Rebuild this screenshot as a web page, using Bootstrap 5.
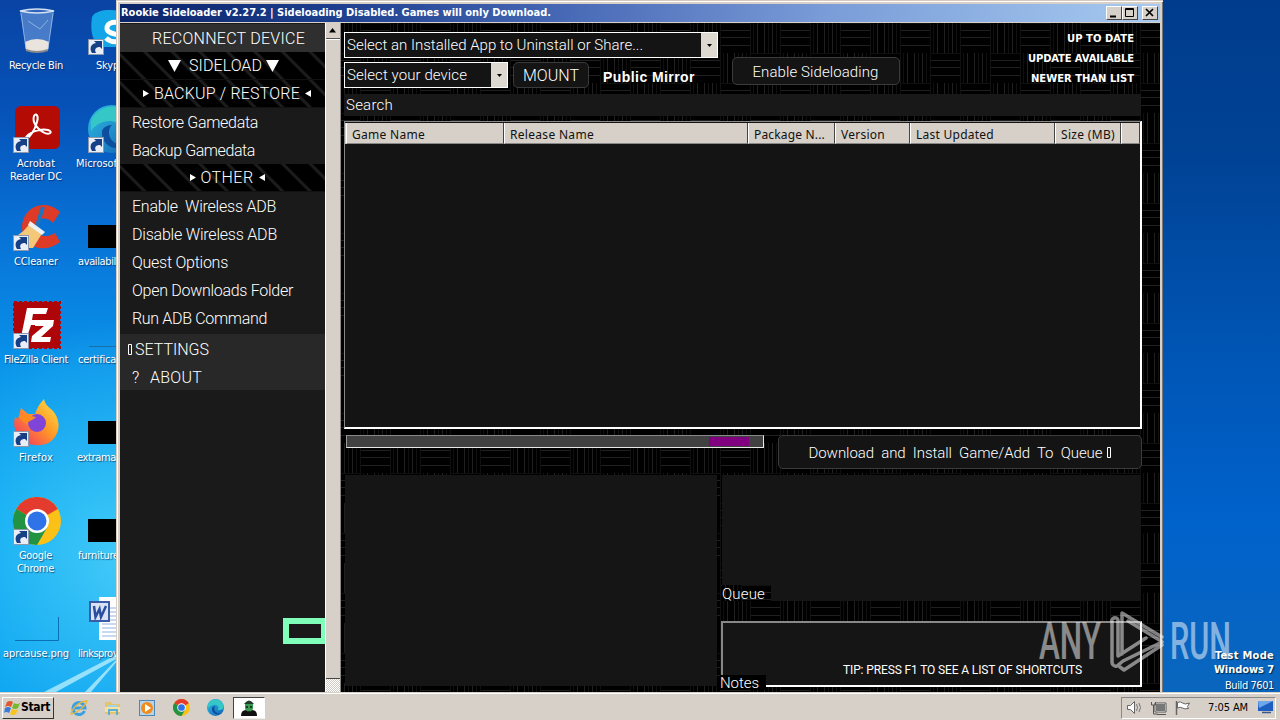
<!DOCTYPE html>
<html lang="en">
<head>
  <meta charset="UTF-8">
  <title>Rookie Sideloader</title>
  <meta name="viewport" content="width=device-width, initial-scale=1">
  <link href="https://cdn.jsdelivr.net/npm/bootstrap@5.3.3/dist/css/bootstrap.min.css" rel="stylesheet">
  <style>
    :root {
      --face: #d6d0c8;
      --weave: url("data:image/svg+xml,%3Csvg xmlns='http://www.w3.org/2000/svg' width='60' height='60'%3E%3Cg stroke='%23202020' fill='none'%3E%3Cpath d='M0 7.5h30M0 14.5h30M0 22.5h30M30 37.5h30M30 44.5h30M30 52.5h30M37.5 0v30M44.5 0v30M52.5 0v30M7.5 30v30M14.5 30v30M22.5 30v30'/%3E%3Cpath stroke='%23101010' d='M0 .5h30M30 30.5h30M30.5 0v60M.5 0v60M33.5 0v30M48.5 0v30M56.5 0v30M3.5 30v30M18.5 30v30M26.5 30v30'/%3E%3C/g%3E%3C/svg%3E");
    }
    body {
      width: 1280px; height: 720px; overflow: hidden; color: #fff;
      font-family: "Roboto", "Liberation Sans", sans-serif; font-size: 15px; font-weight: 300; line-height: 1;
    }
    .desktop {
      height: 692px;
      background:
        linear-gradient(180deg, #003c8e 0, #004294 150px, #0055b4 350px, #0062cc 520px, #0a66bd 692px) right / 130px 100% no-repeat,
        radial-gradient(circle at 130px 560px, rgba(90, 215, 250, .75), rgba(60, 190, 250, 0) 240px),
        linear-gradient(180deg, #0a44a4 0, #0652b8 110px, #0874d8 240px, #0894ea 370px, #00a4f2 520px, #009cf0 692px);
    }
    .rays { left: 0; top: 640px; }
    .icon-col { top: 0; }
    .shortcut { height: 98px; padding-top: 7px; }
    .shortcut svg { display: block; }
    .shortcut .caption-text {
      font: 11px/13px "DejaVu Sans Condensed", "Noto Sans", sans-serif;
      margin-top: 4px; text-shadow: 1px 1px 1px rgba(0, 20, 60, .6);
    }
    .fit { display: inline-block; white-space: pre; }

    /* application window */
    .app-window {
      left: 116px; top: 0; width: 1047px; height: 692px; background: var(--face);
      border-left: 1px solid #d9cfc3; border-top: 1px solid #d6c8bc; box-shadow: inset 1px 1px #fff, inset -1px 0 #777;
      padding: 3px 3px 0 3px;
    }
    .title-row {
      height: 18px; margin-bottom: 1px; padding: 0 2px 0 1px;
      background: linear-gradient(90deg, #0a246a 0, #1c3e8c 20%, #4667b4 42%, #7a9cd8 68%, #a6caf0 100%);
      font: bold 11px/18px "DejaVu Sans Condensed", sans-serif;
    }
    .win-btn { width: 16px; height: 14px; background: var(--face); border: 1px solid; border-color: #fff #444 #444 #fff; }
    .win-btn svg { display: block; }
    .side { width: 205px; background: #1a1a1a; font-size: 16px; padding-top: 1px; }
    .side-row { height: 28px; padding: 1px 0 0 12px; }
    .side-row.last { margin-bottom: 2px; }
    .side-row.action { background: #2f2f2f; }
    .side-row.low { background: #282828; padding-top: 3px; }
    .side-row.group {
      padding-left: 2px; border-bottom: 1px solid #111;
      background: repeating-linear-gradient(45deg, #000 0 15px, #1d1d1d 16.500px 18px, #000 19.500px);
    }
    .side-row.narrow { padding-left: 9px; }
    .focus-mark { left: 166px; top: 617px; width: 42px; height: 26px; border: 6px solid #80ffba; border-right-width: 4px; background: #1a1a1a; }
    .scroll-strip { width: 16px; background: var(--face); border-left: 1px solid #fff; border-right: 1px solid #888; }
    .scroll-up { height: 16px; border-bottom: 1px solid #555; }
    .scroll-thumb { height: 640px; border-top: 1px solid #fff; border-bottom: 1px solid #444; }
    .scroll-gap { height: 14px; background: conic-gradient(#fff 25%, #cfcac2 0 50%, #fff 0 75%, #cfcac2 0) 0 0 / 2px 2px; }
    .weave { background: #000 var(--weave) 19px 0; }
    .main-area { padding: 9px 18px 0 3px; width: 819px; }

    .combo { height: 26px; border: 1px solid #fff; background: #141414; font-size: 15px; padding-left: 2px; }
    .combo-wide { width: 374px; }
    .combo-small { width: 164px; }
    .combo .arrow { width: 16px; background: #ddd8d0; height: 100%; }
    .dark-btn { background: #141414; border: 1px solid #3b3b3b; border-radius: 5px; color: #fff; font-size: 15px; padding-top: 2px; }
    .mount-btn { width: 76px; height: 26px; margin-left: 5px; font-size: 16px; }
    .mirror-text { margin-left: 14px; font: bold 14px/16px "Liberation Sans", sans-serif; }
    .enable-btn { width: 168px; height: 28px; margin: 25px 0 0 14px; padding-right: 1px; }
    .legend-text { font: bold 10px/20px "DejaVu Sans", sans-serif; padding-right: 8px; margin: -3px 0 -5px; }
    .search-bar { height: 22px; background: #181818; padding-left: 2px; margin: 6px 0 5px; width: 797px; }
    .game-list { height: 308px; width: 798px; background: #141414; border: 2px solid #fff; border-top: 1px solid #888; border-left: 1px solid #888; }
    .list-head { height: 21px; margin: 1px 0 0 0; padding-left: 1px; background: var(--face); color: #111; font: 12px/23px "Noto Sans", sans-serif; }
    .list-head > div { border-left: 1px solid #fff; border-right: 1px solid #444; border-bottom: 1px solid #888; padding-left: 5px; height: 21px; overflow: hidden; }
    .lower-row { margin-top: 6px; }
    .progress-box { width: 418px; height: 13px; margin-left: 2px; background: #414141; border: 1px solid #e8e8e8; border-top-color: #888; border-left-color: #999; }
    .progress-chunk { height: 9px; margin: 1px 14px 0 0; width: 40px; background: #800080; }
    .download-btn { width: 364px; height: 34px; margin-left: 14px; padding-left: 1px; }
    .panes { margin: 6px 0 0 1px; }
    .pane { background: #151515; }
    .info-pane { width: 372px; height: 211px; }
    .right-panes { margin-left: 5px; width: 419px; }
    .queue-pane { height: 126px; margin-bottom: 20px; }
    .pane-tag { background-color: #000; font-size: 15px; height: 16px; }
    .queue-tag { width: 49px; padding-top: 2px; }
    .notes-box { width: 421px; height: 66px; background: #151515; border: 2px solid #fff; border-top-color: #888; border-left-color: #888; margin-left: -1px; }
    .tip-text { left: 120px; top: 40px; font-size: 12px; line-height: 14px; font-weight: 400; }
    .notes-tag { left: -3px; top: 52px; width: 46px; height: 15px; padding-top: 1px; }
    .watermark { left: 1030px; top: 600px; }
    .test-mode { right: 6px; top: 649px; font: bold 11px/14px "DejaVu Sans Condensed", sans-serif; text-shadow: 1px 1px 1px #024; }
    .test-mode .build { font-weight: 400; line-height: 17px; }

    /* taskbar */
    .task-strip { height: 28px; background: var(--face); border-top: 1px solid var(--face); box-shadow: inset 0 1px #fff; color: #000; padding: 2px 4px 0 2px; font: 11px "DejaVu Sans Condensed", sans-serif; }
    .start-btn { width: 52px; height: 22px; border: 1px solid; border-color: #fff #333 #333 #fff; font: bold 12px/19px "DejaVu Sans Condensed", sans-serif; padding-left: 1px; }
    .quick-icons { margin-left: 15px; }
    .task-icon { width: 20px; height: 22px; margin-right: 14px; }
    .task-active { width: 32px; height: 22px; margin-left: -6px; background: #fff; border: 1px solid #444; border-right-color: #fff; border-bottom-color: #eee; }
    .tray { width: 155px; height: 22px; border: 1px solid; border-color: #888 #fff #fff #888; }
    .tray-gap { margin-left: 6px; }
    .tray .clock-text { margin-left: 16px; }
  </style>
</head>
<body>

  <svg width="0" height="0" class="position-absolute">
    <defs>
      <g id="lnk">
        <rect x=".5" y="32.5" width="15" height="15" fill="#e9eef6" stroke="#8b98ae"/>
        <path d="M4 46c-3-5-1-9 4-10l-2-2h8v8l-2-2c-4 0-6 2-4 6z" fill="#173f86"/>
      </g>
      <g id="chrome">
        <circle cx="24" cy="24" r="24" fill="#fbc116"/>
        <path d="M24 24 3.2 12A24 24 0 0 1 44.800 12z" fill="#e33b2e"/>
        <path d="M3.200 12A24 24 0 0 0 24 48l10.400-18L24 24z" fill="#229342"/>
        <circle cx="24" cy="24" r="12" fill="#fff"/><circle cx="24" cy="24" r="9.500" fill="#2f73e8"/>
      </g>
      <linearGradient id="edgeG" x1="0" y1="0" x2="1" y2="1"><stop offset="0" stop-color="#2fc0e0"/><stop offset="1" stop-color="#1160b8"/></linearGradient>
      <linearGradient id="foxG" x1="1" y1="0" x2="0" y2="1"><stop offset="0" stop-color="#ffe64a"/><stop offset=".45" stop-color="#ff9a26"/><stop offset="1" stop-color="#f2256d"/></linearGradient>
      <g id="edge">
        <circle cx="24" cy="24" r="24" fill="url(#edgeG)"/>
        <path d="M3 16C9-2 41-6 47 20c1 9-7 13-17 10 5-6 1-14-8-14-8 0-15 4-19 10z" fill="#35c6c8"/>
        <path d="M14 27c-1 12 12 21 27 14-9 1-20-4-20-13 0-4 1-6 3-8-5 0-10 3-10 7z" fill="#0d4f9e"/>
      </g>
    </defs>
  </svg>

  <div class="desktop position-relative overflow-hidden">
    <svg class="rays position-absolute" width="120" height="52">
      <path d="M44 52 118 14v4L56 52zM85 52 118 18v2L91 52z" fill="#bdf2ff" opacity=".75"/>
    </svg>

    <div class="icon-col position-absolute start-0">
      <div class="shortcut">
        <svg width="48" height="48" class="ms-3">
          <path d="M4 4h34l-6 38q-11 4-22 0z" fill="#7aa6e2" opacity=".55"/>
          <path d="M4 4q17-4 34 0-17 4-34 0z" fill="#2d63ba" stroke="#d4e2f2" stroke-width="1.500"/>
          <path d="M9 35q12-6 24 0l-1 8q-11 4-22 0z" fill="#e9e4de"/><path d="M10 43q11 4 22 0" stroke="#8a8a8a" stroke-width="2" fill="none"/>
          <path d="M5 6l5 36M37 6l-5 36M12 14l12 8 8-9" stroke="#a8c8f0" fill="none" opacity=".7"/>
        </svg>
        <div class="caption-text"><span class="fit" data-x="9" data-w="54">Recycle Bin</span></div>
      </div>
      <div class="shortcut">
        <svg width="72" height="48"><g transform="translate(13)">
          <rect x="2" y="1" width="45" height="43" rx="6" fill="#b40c05"/>
          <path d="M12 34c3-7 16-11 23-9 6 2 1 6-5 2-6-3-11-10-9-16 2-4 5 0 3 6-2 8-8 17-12 17z" fill="none" stroke="#fff" stroke-width="2"/>
          <use href="#lnk"/></g>
        </svg>
        <div class="caption-text"><span class="fit" data-x="17" data-w="38">Acrobat</span><br><span class="fit" data-x="10" data-w="52">Reader DC</span></div>
      </div>
      <div class="shortcut">
        <svg width="72" height="48"><g transform="translate(13)">
          <path d="M47 9C33-5 10 3 9 24c0 20 22 28 38 15l-5-9c-9 6-20 3-20-7 1-9 13-10 18-3z" fill="#dd3b28"/>
          <path d="M30 4l-7 22" stroke="#1e74bd" stroke-width="4"/>
          <path d="M17 20l13 9-10 16H7L1 34c7-3 12-8 16-14z" fill="#f4c879"/><path d="M17 18l15 11-3 3-14-10z" fill="#eef0f2"/>
          <use href="#lnk"/></g>
        </svg>
        <div class="caption-text"><span class="fit" data-x="14" data-w="44">CCleaner</span></div>
      </div>
      <div class="shortcut">
        <svg width="72" height="48"><g transform="translate(13)">
          <rect x="1" y="1" width="46" height="46" fill="#ae0508" stroke="#ae0508" stroke-width="2" stroke-dasharray="3 2"/>
          <path d="M14 7h21l-2 6H20l-1 6h9l-2 5h-8l-4 12H8zM22 19h19l-1 6-12 11h10l-1 5H18l1-6 12-10h-9z" fill="#fff"/>
          <use href="#lnk"/></g>
        </svg>
        <div class="caption-text"><span class="fit" data-x="4" data-w="64">FileZilla Client</span></div>
      </div>
      <div class="shortcut">
        <svg width="72" height="48"><g transform="translate(13)">
          <path d="M8 9l7 6h7c2-6 5-11 9-15 1 6 5 8 9 12 6 7 7 16 4 22-4 10-13 13-22 12C9 45-2 33 2 18l3 2z" fill="url(#foxG)"/>
          <circle cx="24" cy="24" r="9" fill="#8045d8"/><path d="M6 17c8-3 11 0 17 1-3 4-9 3-8 8-3-3-7-3-9-9z" fill="#ff8a20"/>
          <use href="#lnk"/></g>
        </svg>
        <div class="caption-text"><span class="fit" data-x="19" data-w="34">Firefox</span></div>
      </div>
      <div class="shortcut">
        <svg width="72" height="48"><g transform="translate(13)"><use href="#chrome"/><use href="#lnk"/></g></svg>
        <div class="caption-text"><span class="fit" data-x="19" data-w="33">Google</span><br><span class="fit" data-x="17" data-w="37">Chrome</span></div>
      </div>
      <div class="shortcut">
        <svg width="72" height="48"><path d="M15 45.500h43.500V22" fill="none" stroke="#0a6fb4"/></svg>
        <div class="caption-text"><span class="fit" data-x="3" data-w="66">aprcause.png</span></div>
      </div>
    </div>

    <div class="icon-col position-absolute start-0">
      <div class="shortcut">
        <svg width="140" height="48"><g transform="translate(88)">
          <path d="M4 10C10 0 30 3 44 6v34H14C4 36 2 24 4 10z" fill="#12a5e8"/>
          <path d="M34 18c-5-5-16-3-15 4 1 6 13 4 13 9s-9 5-14 0" fill="none" stroke="#fff" stroke-width="5"/>
          <use href="#lnk"/></g>
        </svg>
        <div class="caption-text"><span class="fit" data-x="96" data-w="23">Skyp</span></div>
      </div>
      <div class="shortcut">
        <svg width="140" height="48"><g transform="translate(88)"><use href="#edge"/><use href="#lnk"/></g></svg>
        <div class="caption-text"><span class="fit" data-x="76" data-w="41">Microsof</span></div>
      </div>
      <div class="shortcut">
        <svg width="140" height="48"><rect x="88" y="22" width="40" height="23"/></svg>
        <div class="caption-text"><span class="fit" data-x="78" data-w="38">availabil</span></div>
      </div>
      <div class="shortcut">
        <svg width="140" height="48"><path d="M89 45.500h40" stroke="#1a6fa8"/></svg>
        <div class="caption-text"><span class="fit" data-x="78" data-w="38">certifica</span></div>
      </div>
      <div class="shortcut">
        <svg width="140" height="48"><rect x="88" y="22" width="40" height="23"/></svg>
        <div class="caption-text"><span class="fit" data-x="77" data-w="39">extrama</span></div>
      </div>
      <div class="shortcut">
        <svg width="140" height="48"><rect x="88" y="22" width="40" height="23"/></svg>
        <div class="caption-text"><span class="fit" data-x="78" data-w="41">furniture</span></div>
      </div>
      <div class="shortcut">
        <svg width="140" height="48">
          <rect x="99" y="2" width="36" height="43" fill="#fff"/>
          <path d="M102 13h30M102 17h30M102 21h30M102 25h30M102 29h30M102 33h30M102 37h30M102 41h30" stroke="#8fb2e4"/>
          <rect x="90" y="7" width="19" height="19" fill="#d9e3f4" stroke="#3b5ca8" stroke-width="2"/>
          <path d="M94 11l1.500 11 4-8 1.500 8 5-11" fill="none" stroke="#2b4fa0" stroke-width="2.500"/>
        </svg>
        <div class="caption-text"><span class="fit" data-x="78" data-w="40">linksprov</span></div>
      </div>
    </div>

    <div class="app-window position-absolute d-flex flex-column">
      <div class="title-row d-flex align-items-center justify-content-between">
        <span class="fit" data-w="430">Rookie Sideloader v2.27.2 | Sideloading Disabled. Games will only Download.</span>
        <div class="d-flex">
          <div class="win-btn"><svg width="14" height="12"><path d="M3 9.500h6" stroke="#000" stroke-width="2"/></svg></div>
          <div class="win-btn"><svg width="14" height="12"><path d="M2.500 1.500h8v8h-8zM2 2.500h9" stroke="#000" fill="none"/></svg></div>
          <div class="win-btn ms-1"><svg width="14" height="12"><path d="M3 2l7 7M10 2l-7 7" stroke="#000" stroke-width="1.700"/></svg></div>
        </div>
      </div>

      <div class="d-flex flex-grow-1">
        <div class="side">
          <div class="side-row action d-flex align-items-center justify-content-center"><span class="fit" data-w="153">RECONNECT DEVICE</span></div>
          <div class="side-row group d-flex align-items-center justify-content-center">
            <svg width="13" height="12" class="me-2"><path d="M0 0h13L6.500 12z" fill="#fff"/></svg><span class="fit" data-w="73">SIDELOAD</span><svg width="13" height="12" class="ms-1"><path d="M0 0h13L6.500 12z" fill="#fff"/></svg>
          </div>
          <div class="side-row group narrow d-flex align-items-center justify-content-center gap-1">
            <svg width="7" height="8"><path d="M0 0v7l6-3.500z" fill="#fff"/></svg><span class="fit" data-w="146">BACKUP / RESTORE</span><svg width="7" height="8"><path d="M7 0v7L1 3.500z" fill="#fff"/></svg>
          </div>
          <div class="side-row d-flex align-items-center"><span class="fit" data-w="126">Restore Gamedata</span></div>
          <div class="side-row d-flex align-items-center"><span class="fit" data-w="123">Backup Gamedata</span></div>
          <div class="side-row group narrow d-flex align-items-center justify-content-center gap-1">
            <svg width="7" height="8"><path d="M0 0v7l6-3.500z" fill="#fff"/></svg><span class="fit" data-w="53">OTHER</span><svg width="7" height="8"><path d="M7 0v7L1 3.500z" fill="#fff"/></svg>
          </div>
          <div class="side-row d-flex align-items-center"><span class="fit" data-w="144">Enable  Wireless ADB</span></div>
          <div class="side-row d-flex align-items-center"><span class="fit" data-w="145">Disable Wireless ADB</span></div>
          <div class="side-row d-flex align-items-center"><span class="fit" data-w="96">Quest Options</span></div>
          <div class="side-row d-flex align-items-center"><span class="fit" data-w="161">Open Downloads Folder</span></div>
          <div class="side-row last d-flex align-items-center"><span class="fit" data-w="135">Run ADB Command</span></div>
          <div class="side-row low d-flex align-items-center ps-2"><svg width="7" height="12"><path d="M.5.500h3v10h-3z" stroke="#fff" fill="none"/></svg><span class="fit" data-w="74">SETTINGS</span></div>
          <div class="side-row low d-flex align-items-center"><span class="fit" data-w="18">?</span><span class="fit" data-w="52">ABOUT</span></div>
        </div>
        <div class="scroll-strip">
          <div class="scroll-up d-flex align-items-center justify-content-center"><svg width="8" height="5"><path d="M0 4.500h7L3.500 0z"/></svg></div>
          <div class="scroll-thumb"></div>
          <div class="scroll-gap"></div>
        </div>

        <div class="main-area weave">
          <div class="d-flex">
            <div class="d-flex flex-column gap-1">
              <div class="combo combo-wide d-flex align-items-center justify-content-between">
                <span class="fit" data-w="296">Select an Installed App to Uninstall or Share...</span>
                <div class="arrow d-flex align-items-center justify-content-center"><svg width="5" height="3"><path d="M0 0h5L2.500 3z"/></svg></div>
              </div>
              <div class="d-flex align-items-center">
                <div class="combo combo-small d-flex align-items-center justify-content-between">
                  <span class="fit" data-w="120">Select your device</span>
                  <div class="arrow d-flex align-items-center justify-content-center"><svg width="5" height="3"><path d="M0 0h5L2.500 3z"/></svg></div>
                </div>
                <div class="dark-btn mount-btn d-flex align-items-center justify-content-center"><span class="fit" data-w="56">MOUNT</span></div>
                <span class="fit mirror-text mt-1" data-w="92">Public Mirror</span>
              </div>
            </div>
            <div class="dark-btn enable-btn d-flex align-items-center justify-content-center"><span class="fit" data-w="126">Enable Sideloading</span></div>
            <div class="ms-auto legend-text d-flex flex-column align-items-end">
              <span class="fit" data-w="67">UP TO DATE</span>
              <span class="fit" data-w="106">UPDATE AVAILABLE</span>
              <span class="fit" data-w="103">NEWER THAN LIST</span>
            </div>
          </div>

          <div class="search-bar d-flex align-items-center"><span class="fit" data-w="47">Search</span></div>

          <div class="game-list">
            <div class="list-head d-flex" id="listHead"></div>
          </div>

          <div class="lower-row d-flex align-items-start">
            <div class="progress-box d-flex justify-content-end"><div class="progress-chunk"></div></div>
            <div class="dark-btn download-btn d-flex align-items-center justify-content-center">
              <span class="fit" data-w="294">Download  and  Install  Game/Add  To  Queue</span>
              <svg width="6" height="12" class="ms-1"><path d="M.5.500h3v10h-3z" stroke="#fff" fill="none"/></svg>
            </div>
          </div>

          <div class="d-flex panes">
            <div class="pane info-pane"></div>
            <div class="right-panes">
              <div class="pane queue-pane d-flex align-items-end"><div class="pane-tag weave queue-tag"><span class="fit" data-w="43">Queue</span></div></div>
              <div class="notes-box position-relative">
                <span class="fit tip-text position-absolute" data-w="239">TIP: PRESS F1 TO SEE A LIST OF SHORTCUTS</span>
                <div class="pane-tag notes-tag position-absolute"><span class="fit" data-w="39">Notes</span></div>
              </div>
            </div>
          </div>
        </div>
      </div>
      <div class="focus-mark position-absolute"></div>
    </div>

    <div class="test-mode position-absolute text-end">
      <div><span class="fit" data-w="59">Test Mode</span></div>
      <div><span class="fit" data-w="60">Windows 7</span></div>
      <div class="build"><span class="fit" data-w="49">Build 7601</span></div>
    </div>

    <svg class="watermark position-absolute" width="210" height="80" opacity=".5">
      <g fill="#fff" font-family="Roboto" font-weight="500" font-size="52">
        <text x="9" y="59" textLength="62" lengthAdjust="spacingAndGlyphs">ANY</text>
        <text x="140" y="59" textLength="61" lengthAdjust="spacingAndGlyphs">RUN</text>
      </g>
      <g fill="none" stroke="#fff" stroke-width="3.500" stroke-linejoin="round" stroke-linecap="round">
        <path d="M92 54V13L132 37M98 21l33 20M132 42 93 61 87 66a4 4 0 0 1-5-4V22a3 3 0 0 1 6-2v36l28-18M90 67l4 3 38-25"/>
      </g>
    </svg>
  </div>

  <div class="task-strip d-flex align-items-center">
    <div class="start-btn d-flex align-items-center">
      <svg width="17" height="16"><path d="M3 2q3-2 6 0L7 7Q4 5 1 7z" fill="#e4572e"/><path d="M10 3q3 2 6 0l-2 5q-3 2-6 0z" fill="#76b82a"/><path d="M1 8q3-2 6 0l-2 5q-3-2-5 0z" fill="#3a7bd5"/><path d="M8 9q3 2 6 0l-2 5q-3 2-6 0z" fill="#fcc419"/></svg>
      <span class="fit" data-w="29">Start</span>
    </div>
    <div class="d-flex quick-icons">
      <div class="task-icon d-flex align-items-center justify-content-center"><svg width="18" height="18"><path d="M14.500 12A6 6 0 1 1 15 9H4" fill="none" stroke="#3ca0e0" stroke-width="3"/><path d="M1 15C2 9 10 2 17 2c-1 4-9 12-16 13z" fill="none" stroke="#e8b83a" stroke-width="1.300"/></svg></div>
      <div class="task-icon d-flex align-items-center justify-content-center"><svg width="18" height="18"><path d="M1 3h6l1 2h8v10H1z" fill="#e5c368"/><path d="M3 6h11v6H3z" fill="#9ed2ee"/><path d="M1 8h15v5H1z" fill="#f5e29c"/><path d="M5 16v-5h8v5" fill="none" stroke="#5dadd8" stroke-width="2"/></svg></div>
      <div class="task-icon d-flex align-items-center justify-content-center"><svg width="18" height="18"><rect x="1.500" y="1.500" width="15" height="15" fill="#b7d4ea" stroke="#4f87b4"/><circle cx="9" cy="9" r="6" fill="#f08b1d"/><path d="M7 5v8l6-4z" fill="#fff"/></svg></div>
      <div class="task-icon d-flex align-items-center justify-content-center"><svg width="17" height="17" viewBox="0 0 48 48"><use href="#chrome"/></svg></div>
      <div class="task-icon d-flex align-items-center justify-content-center"><svg width="17" height="17" viewBox="0 0 48 48"><use href="#edge"/></svg></div>
    </div>
    <div class="task-active d-flex align-items-center justify-content-center">
      <svg width="18" height="18"><path d="M1 17q0-6 5-6h6q5 0 5 6z" fill="#111"/><path d="M5 5q4-5 8 0v5q-4 6-8 0z" fill="#3b9a52"/><path d="M4 5q5-7 10 0z" fill="#1f3d28"/><path d="M6 8h2M10 8h2M8 13h2" stroke="#0a2010" stroke-width="1.500"/></svg>
    </div>
    <div class="tray ms-auto d-flex align-items-center">
      <svg width="18" height="16" class="ms-1"><path d="M1.500 5.500h3l4-4v12l-4-4h-3z" fill="#fff" stroke="#666"/><path d="M10.500 4q2 3.500 0 7M13 3q3 4.500 0 9" fill="none" stroke="#777"/></svg>
      <svg width="18" height="16" class="tray-gap"><rect x="5.500" y="3.500" width="10" height="8" fill="#777" stroke="#fff"/><path d="M5 3h11v9H5zM7 14.500h9" stroke="#555" fill="none"/><path d="M1.500 2v3h4V2M3.500 5v9h4" stroke="#555" fill="none"/></svg>
      <svg width="18" height="16" class="tray-gap"><path d="M2.500 1v14" stroke="#666" stroke-width="1.500"/><path d="M3.500 2.500q3-1.500 5 .5t7 0l-2 3.500 1 2q-4 1-6-.5t-5 0z" fill="#fff" stroke="#666"/></svg>
      <span class="fit clock-text" data-w="40">7:05 AM</span>
      <svg width="17" height="15" class="ms-auto"><path d="M0 1h15v10H0z" fill="#1d5fc0"/><path d="M0 1h15L1 8z" fill="#6ea8ea"/><path d="M4 12.500h9" stroke="#38598c" stroke-width="1.500"/></svg>
    </div>
  </div>

  <script src="https://cdn.jsdelivr.net/npm/bootstrap@5.3.3/dist/js/bootstrap.bundle.min.js"></script>
  <script>
    const columns = [
      ['Game Name', 158, 73], ['Release Name', 244, 84], ['Package N...', 87, 71],
      ['Version', 75, 44], ['Last Updated', 145, 78], ['Size (MB)', 66, 54], ['', 19, 0]
    ];

    const head = document.getElementById('listHead');
    columns.forEach(([label, width, textWidth]) => {
      const cell = document.createElement('div');
      cell.style.width = width + 'px';
      cell.style.flex = 'none';
      cell.innerHTML = label ? `<span class="fit" data-w="${textWidth}">${label}</span>` : '';
      head.appendChild(cell);
    });

    // spread each label over its own width
    document.querySelectorAll('.fit').forEach(el => {
      const range = document.createRange();
      range.selectNodeContents(el);
      const natural = range.getBoundingClientRect().width;
      el.style.letterSpacing = (el.dataset.w - natural) / el.textContent.length + 'px';
      if (el.dataset.x) el.style.marginLeft = el.dataset.x + 'px';
    });
  </script>
</body>
</html>
